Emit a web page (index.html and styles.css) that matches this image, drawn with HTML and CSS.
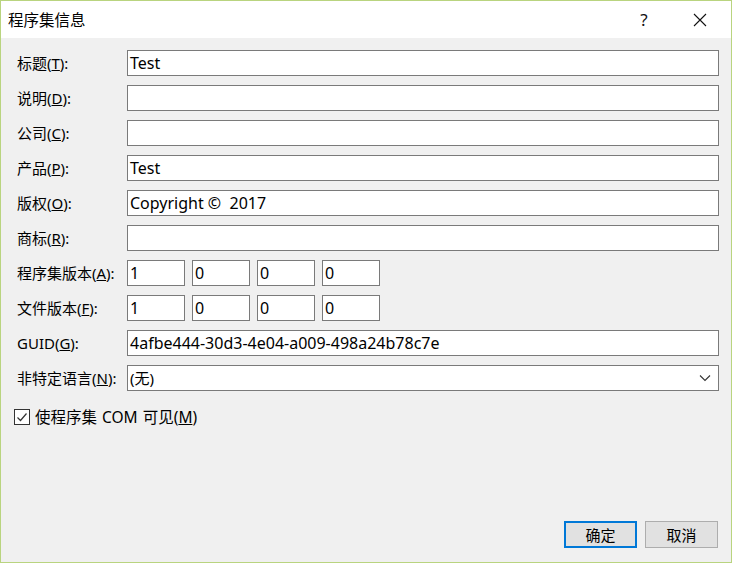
FILE: index.html
```html
<!DOCTYPE html>
<html lang="zh">
<head>
<meta charset="utf-8">
<title>程序集信息</title>
<link rel="stylesheet" href="styles.css">
</head>
<body>
<div class="window">
  <div class="titlebar">
    <span class="title">程序集信息</span>
    <span class="tb-help">?</span>
    <span class="tb-close">
      <svg width="14" height="14" viewBox="0 0 14 14"><path d="M1 1 L13 13 M13 1 L1 13" stroke="#111" stroke-width="1.1" fill="none"/></svg>
    </span>
  </div>
  <div class="content">
    <div class="form">
      <label class="lbl">标题(<u>T</u>):</label>
      <div class="field">Test</div>
      <label class="lbl">说明(<u>D</u>):</label>
      <div class="field"></div>
      <label class="lbl">公司(<u>C</u>):</label>
      <div class="field"></div>
      <label class="lbl">产品(<u>P</u>):</label>
      <div class="field">Test</div>
      <label class="lbl">版权(<u>O</u>):</label>
      <div class="field">Copyright ©&nbsp; 2017</div>
      <label class="lbl">商标(<u>R</u>):</label>
      <div class="field"></div>
      <label class="lbl">程序集版本(<u>A</u>):</label>
      <div class="versions">
        <div class="field small">1</div>
        <div class="field small">0</div>
        <div class="field small">0</div>
        <div class="field small">0</div>
      </div>
      <label class="lbl">文件版本(<u>F</u>):</label>
      <div class="versions">
        <div class="field small">1</div>
        <div class="field small">0</div>
        <div class="field small">0</div>
        <div class="field small">0</div>
      </div>
      <label class="lbl">GUID(<u>G</u>):</label>
      <div class="field">4afbe444-30d3-4e04-a009-498a24b78c7e</div>
      <label class="lbl">非特定语言(<u>N</u>):</label>
      <div class="field select">
        <span>(无)</span>
        <svg class="chev" width="12" height="8" viewBox="0 0 12 8"><path d="M1 1.5 L6 6.5 L11 1.5" stroke="#333" stroke-width="1.1" fill="none"/></svg>
      </div>
    </div>
    <div class="check-row">
      <span class="checkbox">
        <svg width="14" height="14" viewBox="0 0 14 14"><path d="M2.5 7.5 L5.5 10.5 L11.5 3.5" stroke="#333" stroke-width="1.2" fill="none"/></svg>
      </span>
      <span class="check-label">使程序集 COM 可见(<u>M</u>)</span>
    </div>
    <div class="spacer"></div>
    <div class="buttons">
      <div class="btn default">确定</div>
      <div class="btn">取消</div>
    </div>
  </div>
</div>
</body>
</html>
```

FILE: styles.css
```css
html, body {
  margin: 0;
  padding: 0;
  background: #f0f0f0;
}
body {
  font-family: "Noto Sans", "Noto Sans CJK SC", sans-serif;
  font-size: 15px;
  color: #000;
}
.window {
  width: 732px;
  height: 563px;
  box-sizing: border-box;
  border: 1px solid #b9d47f;
  display: flex;
  flex-direction: column;
}
.titlebar {
  height: 37px;
  background: #fff;
  display: flex;
  align-items: center;
  flex-shrink: 0;
}
.title {
  padding-left: 7px;
  font-size: 15.5px;
  flex: 1;
}
.tb-help {
  width: 20px;
  text-align: center;
  font-size: 17px;
  margin-right: 39px;
  color: #111;
}
.tb-close {
  width: 14px;
  height: 14px;
  margin-right: 24px;
  display: flex;
}
.content {
  flex: 1;
  background: #f0f0f0;
  display: flex;
  flex-direction: column;
  padding: 12px 12px 14px 16px;
}
.form {
  display: grid;
  grid-template-columns: 110px 1fr;
  grid-auto-rows: 26px;
  row-gap: 9px;
  align-items: center;
}
.lbl {
  line-height: 26px;
  white-space: nowrap;
}
.field {
  height: 26px;
  box-sizing: border-box;
  border: 1px solid #7a7a7a;
  background: #fff;
  padding: 0 2px;
  line-height: 24px;
  font-size: 16px;
  white-space: nowrap;
  overflow: hidden;
}
.versions {
  display: flex;
  gap: 7px;
}
.field.small {
  width: 58px;
}
.select {
  display: flex;
  align-items: center;
  justify-content: space-between;
  padding-right: 7px;
  font-size: 15px;
}
.chev {
  display: block;
}
.check-row {
  display: flex;
  align-items: center;
  margin-top: 17px;
  margin-left: -3px;
}
.checkbox {
  width: 16px;
  height: 16px;
  box-sizing: border-box;
  border: 1px solid #333;
  background: #fff;
  display: flex;
  align-items: center;
  justify-content: center;
}
.check-label {
  margin-left: 5px;
  line-height: 18px;
  font-size: 15.5px;
  word-spacing: 1px;
}
.spacer {
  flex: 1;
}
.buttons {
  display: flex;
  justify-content: flex-end;
  gap: 8px;
  margin-right: 1px;
}
.btn {
  width: 73px;
  height: 27px;
  box-sizing: border-box;
  border: 1px solid #adadad;
  background: #e1e1e1;
  display: flex;
  align-items: center;
  justify-content: center;
}
.btn.default {
  border: 2px solid #0078d7;
}
```
